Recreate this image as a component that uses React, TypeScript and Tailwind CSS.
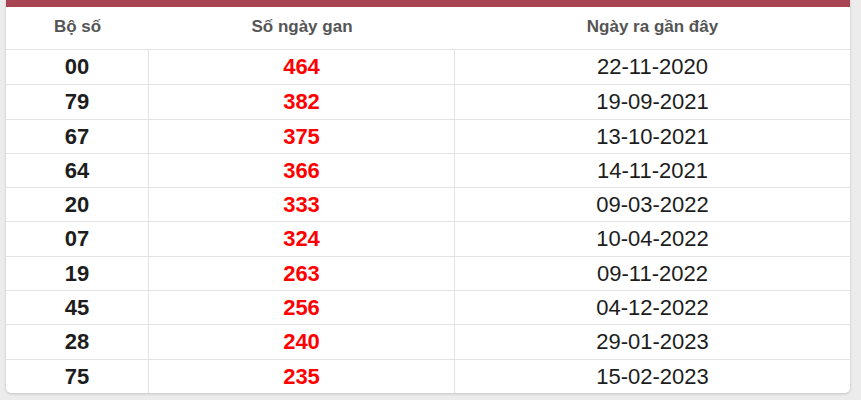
const rows: [string, string, string][] = [
    ['00', '464', '22-11-2020'],
    ['79', '382', '19-09-2021'],
    ['67', '375', '13-10-2021'],
    ['64', '366', '14-11-2021'],
    ['20', '333', '09-03-2022'],
    ['07', '324', '10-04-2022'],
    ['19', '263', '09-11-2022'],
    ['45', '256', '04-12-2022'],
    ['28', '240', '29-01-2023'],
    ['75', '235', '15-02-2023'],
];

export default function App() {
    return (
        <div className="h-[400px] w-[861px] bg-[#ececec] pl-[6px] font-['Liberation_Sans',Arial,sans-serif]">
            <div className="w-[844px] overflow-hidden rounded-b-[5px] bg-white shadow-[0_1px_3px_rgba(0,0,0,0.18)]">
                <div className="h-[7px] bg-[#a94553]" />
                <div className="grid h-[43px] grid-cols-[143px_306px_395px] items-center border-b border-[#e3e3e3] pb-[2px] text-[17px] font-bold text-[#555]">
                    <div className="text-center">Bộ số</div>
                    <div className="text-center">Số ngày gan</div>
                    <div className="text-center">Ngày ra gần đây</div>
                </div>
                {rows.map(([bo, gan, ngay], i) => (
                    <div
                        key={bo}
                        className={`grid h-[34.3px] grid-cols-[143px_306px_395px] text-[22px] text-[#1d1d1d] ${i > 0 ? 'border-t border-[#e3e3e3]' : ''}`}
                    >
                        <div className="flex items-center justify-center border-r border-[#e3e3e3] pb-[1px] font-bold">{bo}</div>
                        <div className="flex items-center justify-center border-r border-[#e3e3e3] pb-[1px] font-bold text-[#ff0000]">{gan}</div>
                        <div className="flex items-center justify-center pb-[1px]">{ngay}</div>
                    </div>
                ))}
            </div>
        </div>
    );
}
